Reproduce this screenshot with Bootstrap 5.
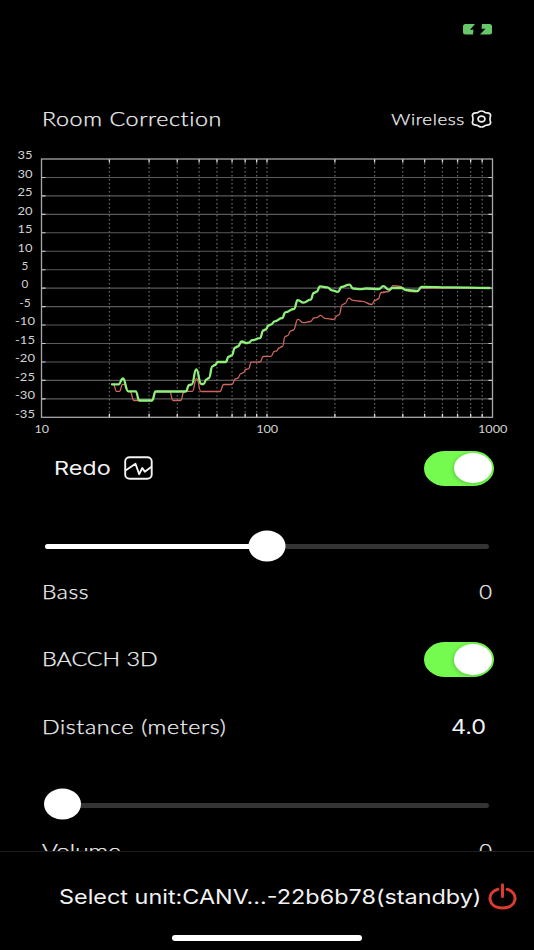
<!DOCTYPE html>
<html lang="en">
<head>
<meta charset="utf-8">
<meta name="viewport" content="width=device-width, initial-scale=1">
<title>Room Correction</title>
<link rel="stylesheet" href="https://cdn.jsdelivr.net/npm/bootstrap@5.3.0/dist/css/bootstrap.min.css">
<style>
html,body{height:950px;overflow:hidden}
body{background:#000;color:#f2f2f2;font-family:Lato,"Liberation Sans",sans-serif;font-size:19px;line-height:24px;font-weight:300}
.screen{width:534px;height:950px}
.scroller{height:851px}
.status{height:101px;padding:24px 42px 0}
.title-row{height:36px;padding:0 42px 0 41.5px}
.plot text{font-family:Lato,sans-serif;font-size:11px;font-weight:400;fill:#d2d2d2}
.wide{display:inline-block;white-space:nowrap;transform-origin:0 50%;transform:scaleX(var(--sx,1.15));-webkit-text-stroke:.25px currentColor}
.wide-end{transform-origin:100% 50%}
.ui{font-family:Inter,"Liberation Sans",sans-serif;font-weight:400;color:#f2f2f2;-webkit-text-stroke:0}
.t-title{--sx:1.225;letter-spacing:.5px}
.t-wireless{--sx:1.17;font-size:16px;letter-spacing:.5px;margin-right:2px}
.t-redo{--sx:1.23;font-size:19px;margin-top:2px}
.t-bass{--sx:1.2;letter-spacing:.5px}
.t-bacch{--sx:1.225}
.t-dist{--sx:1.225;letter-spacing:.5px}
.t-vol{--sx:1.28}
.t-num{--sx:1.15;margin-right:2px}
.t-val{--sx:1.17;font-size:20px}
.t-unit{--sx:1.17;font-size:20px;margin-top:2px}
.redo-row{height:48px;padding:0 40px 0 54px}
.redo-icon{margin-left:24px}
.setting{padding:0 40px 0 41.5px}
.toggle{width:70px;height:35px;padding:0 2.5px;background:#75fb4f;border-radius:21px/17.5px}
.toggle i{width:37.5px;height:30.5px;background:#fff;border-radius:50%;box-shadow:-1px 1px 4px #0003}
.slider{height:32px;margin:38.7px 45px 0}
.slider .track{height:4.6px;background:#343434;border-radius:3px}
.slider .fill{height:4.6px;background:#fff;border-radius:3px 0 0 3px}
.slider .knob{width:37px;height:31px;background:#fff;border-radius:50%;margin-top:-1px}
.knob-start{left:-1px}
.bass-row{height:59.3px}
.bacch-row{height:75px}
.dist-row{height:60px}
.dist-slider{margin-top:32.5px}
.vol-row{height:59px}
.unit-bar{height:99px;border-top:1.5px solid #1d1d1d;background:#000}
.unit-row{height:83px;padding:5px 17px 0 59px}
.home{width:190px;height:6px;background:#fff;border-radius:3px}
</style>
</head>
<body>
<div class="screen d-flex flex-column">
  <main class="scroller overflow-hidden">
    <div class="status d-flex justify-content-end align-items-start">
      <svg width="29" height="11" viewBox="0 0 29 11"><path fill="#66c86a" d="M2.500 0H12L7 5.800H10.500L10 10.500H2.500Q0 10.500 0 8V2.500Q0 0 2.500 0ZM19 0H26.500Q29 0 29 2.500V8Q29 10.500 26.500 10.500H17L22.500 4.700H18.500Z"/></svg>
    </div>
    <div class="title-row d-flex justify-content-between align-items-center">
      <span class="wide t-title">Room Correction</span>
      <span class="d-flex align-items-center">
        <span class="wide wide-end t-wireless">Wireless</span>
        <svg class="ms-1" width="21" height="18" viewBox="0 0 20 18" preserveAspectRatio="none" fill="none" stroke="#eee" stroke-width="1.600"><path d="M7.500 1.700Q10 .2 12.500 1.700Q13.500 3 15.500 2.900Q18.700 3.100 18.700 5.800Q17.900 7.500 18.200 9Q17.900 10.500 18.700 12.200Q18.700 14.900 15.500 15.100Q13.500 15 12.500 16.300Q10 17.800 7.500 16.300Q6.500 15 4.500 15.100Q1.300 14.900 1.300 12.200Q2.100 10.500 1.800 9Q2.100 7.500 1.300 5.800Q1.300 3.100 4.500 2.900Q6.500 3 7.500 1.700Z"/><ellipse cx="10" cy="9" rx="3.300" ry="2.900"/></svg>
      </span>
    </div>
    <svg class="plot d-block" id="plot" width="534" height="307" viewBox="0 137 534 307"></svg>
    <div class="redo-row d-flex justify-content-between align-items-center">
      <span class="d-flex align-items-center">
        <span class="wide t-redo ui">Redo</span>
        <svg class="redo-icon" width="29" height="24" viewBox="0 0 29 24" fill="none" stroke="#f4f4f4" stroke-width="1.900" stroke-linejoin="round"><rect x="1.200" y="1.200" width="26.500" height="21.600" rx="4.500" ry="4"/><path d="M1.500 14.500L11.500 7.700L15.200 18.200L18.300 12L20.800 15.700L27.500 10.800"/></svg>
      </span>
      <span class="toggle d-flex align-items-center justify-content-end" role="switch" aria-checked="true"><i></i></span>
    </div>
    <div class="slider d-flex align-items-center">
      <div class="track w-100 position-relative d-flex align-items-center"><div class="fill w-50"></div><div class="knob position-absolute start-50 top-50 translate-middle"></div></div>
    </div>
    <div class="setting bass-row d-flex justify-content-between align-items-center">
      <span class="wide t-bass">Bass</span><span class="wide wide-end t-num">0</span>
    </div>
    <div class="setting bacch-row d-flex justify-content-between align-items-center">
      <span class="wide t-bacch">BACCH 3D</span>
      <span class="toggle d-flex align-items-center justify-content-end" role="switch" aria-checked="true"><i></i></span>
    </div>
    <div class="setting dist-row d-flex justify-content-between align-items-center">
      <span class="wide t-dist">Distance (meters)</span><span class="wide wide-end t-val ui me-2">4.0</span>
    </div>
    <div class="slider dist-slider d-flex align-items-center">
      <div class="track w-100 position-relative"><div class="knob knob-start position-absolute top-50 translate-middle-y"></div></div>
    </div>
    <div class="setting vol-row d-flex justify-content-between align-items-center">
      <span class="wide t-vol">Volume</span><span class="wide wide-end t-num">0</span>
    </div>
  </main>
  <footer class="unit-bar d-flex flex-column align-items-center">
    <div class="unit-row w-100 d-flex justify-content-between align-items-center">
      <span class="wide t-unit ui">Select unit:CANV...-22b6b78(standby)</span>
      <svg width="29" height="27" viewBox="0 0 29 27" fill="none" stroke="#dc3b2f" stroke-width="3" stroke-linecap="round"><path d="M14.500 1.700V13.500M9.800 6.200C-2 9.500-.5 25 14.500 25S31 9.500 19.200 6.200"/></svg>
    </div>
    <div class="home"></div>
  </footer>
</div>
<script>
const X0=41.5,X1=492.5,Y0=159,Y1=417.3;
const px=v=>X0+(Math.log10(v)-1)*(X1-X0)/2, py=v=>Y0+(35-v)*(Y1-Y0)/70;
let s='';
for(let v=30;v>=-30;v-=5)s+=`<path d="M${X0} ${py(v)}H${X1}" stroke="#5a5a5a" stroke-width="1.100"/><path d="M${X0} ${py(v)}h4M${X1} ${py(v)}h-4" stroke="#ccc" stroke-width="1.100"/>`;
for(const d of [10,100])for(let k=1;k<10;k++){const v=d*k;if(v===10)continue;const x=px(v);
 s+=`<path d="M${x} ${Y0}V${Y1}" stroke="#6a6a6a" stroke-width="1.200" stroke-dasharray="1.600 2.400"/><path d="M${x} ${Y0}v3.500M${x} ${Y1}v-3.500" stroke="#ddd" stroke-width="1.300"/>`;}
s+=`<rect x="${X0}" y="${Y0}" width="${X1-X0}" height="${Y1-Y0}" fill="none" stroke="#a6a6a6" stroke-width="1.300"/>`;
for(let v=35;v>=-35;v-=5){const t=String(v),w={1:6.8,2:v<0?11.5:15,3:20}[t.length];
 s+=`<text x="25" y="${py(v)+.3}" text-anchor="middle" textLength="${w}" lengthAdjust="spacingAndGlyphs">${t}</text>`;}
for(const [v,w] of [[10,14.5],[100,22],[1000,29.5]])s+=`<text x="${px(v)+.2}" y="432.500" text-anchor="middle" textLength="${w}" lengthAdjust="spacingAndGlyphs">${v}</text>`;
const curve=p=>p.map(([x,y],i)=>{if(!i)return`M${x} ${y}`;const m=(x+p[i-1][0])/2;return`C${m} ${p[i-1][1]} ${m} ${y} ${x} ${y}`}).join('');
const base=[[112,384.3],[113.5,384.5],[116.5,391.3],[119.500,391.3],[122.500,384.5],[125.3,384.3],[128,391.3],[130,391.5],[134,400.5],[152,400.5],[155.7,391.5],[169.7,391.5],[173,400.5],[180.5,400.5],[184.300,391.5],[192.3,391.3],[196.600,378.5],[201,391.5],[220,391.5],[223.7,384.5],[232,384.5],[235.300,379],[238,378],[240.500,373.800],[243.5,372.7],[245.7,369.5],[248.5,368.800],[251.3,362.2],[260,362],[263.300,356.5],[271,356.3],[274.300,351.500],[276.500,351],[279,348],[282.300,346.500],[285.3,336.500],[288,335.3],[290.500,331],[293.500,330],[297.800,319.400],[303.500,322.7],[310.500,321.500],[314,318],[317,317.500],[320.5,315.3],[325,318.3],[334,319.3],[337,315.800],[339,314.800],[342.300,304.800],[345,303.500],[348.800,298.200],[353,300.300],[362,301.300],[371.7,304.500],[375,300.5],[378,299],[381.300,292.5],[389,291.5],[393,285.7],[400.700,286.3],[404,289.500],[410,291.500],[417.500,291.5],[421.300,288.200],[489,288.200]];
const fixed=[[112,384.3],[118.500,384.3],[123,378.500],[128,391.3],[135.7,391.3],[139.300,400.5],[152,400.5],[155.7,391.5],[185.7,391.5],[189.300,385],[191.700,384.3],[196.300,369.300],[201.200,384],[203.5,384],[206.500,379.500],[209,378],[212.300,366.300],[215,365],[217.700,362],[225.7,362],[228.700,356.7],[231.7,355.5],[235,347.7],[237.7,346.5],[241.700,341.500],[246.700,343],[249,342.7],[252,340.200],[260,338.200],[263.300,330.500],[265.700,329.500],[268.500,325.5],[271.3,324.300],[274.700,321.3],[282.300,318],[285.300,312.3],[294,309],[297.700,300.2],[303.500,302.700],[310.700,299.7],[313.700,293],[316.700,291.700],[320,286.300],[327.300,287.300],[332,290.3],[338,291.800],[341.500,287],[349.500,284.700],[353,288.5],[360.700,289.200],[366,288.500],[379,289],[383.200,286.2],[389,289.7],[392.500,288],[401.700,288],[405.700,290],[417.300,291],[421.500,287],[450,287.4],[489.500,288]];
s+=`<path d="${curve(base)}" fill="none" stroke="#cd665e" stroke-width="1.300" stroke-linecap="round"/><path d="${curve(fixed)}" fill="none" stroke="#8ff07c" stroke-width="2.300" stroke-linecap="round"/>`;
document.getElementById('plot').innerHTML=s;
</script>
<script src="https://cdn.jsdelivr.net/npm/bootstrap@5.3.0/dist/js/bootstrap.bundle.min.js"></script>
</body>
</html>
